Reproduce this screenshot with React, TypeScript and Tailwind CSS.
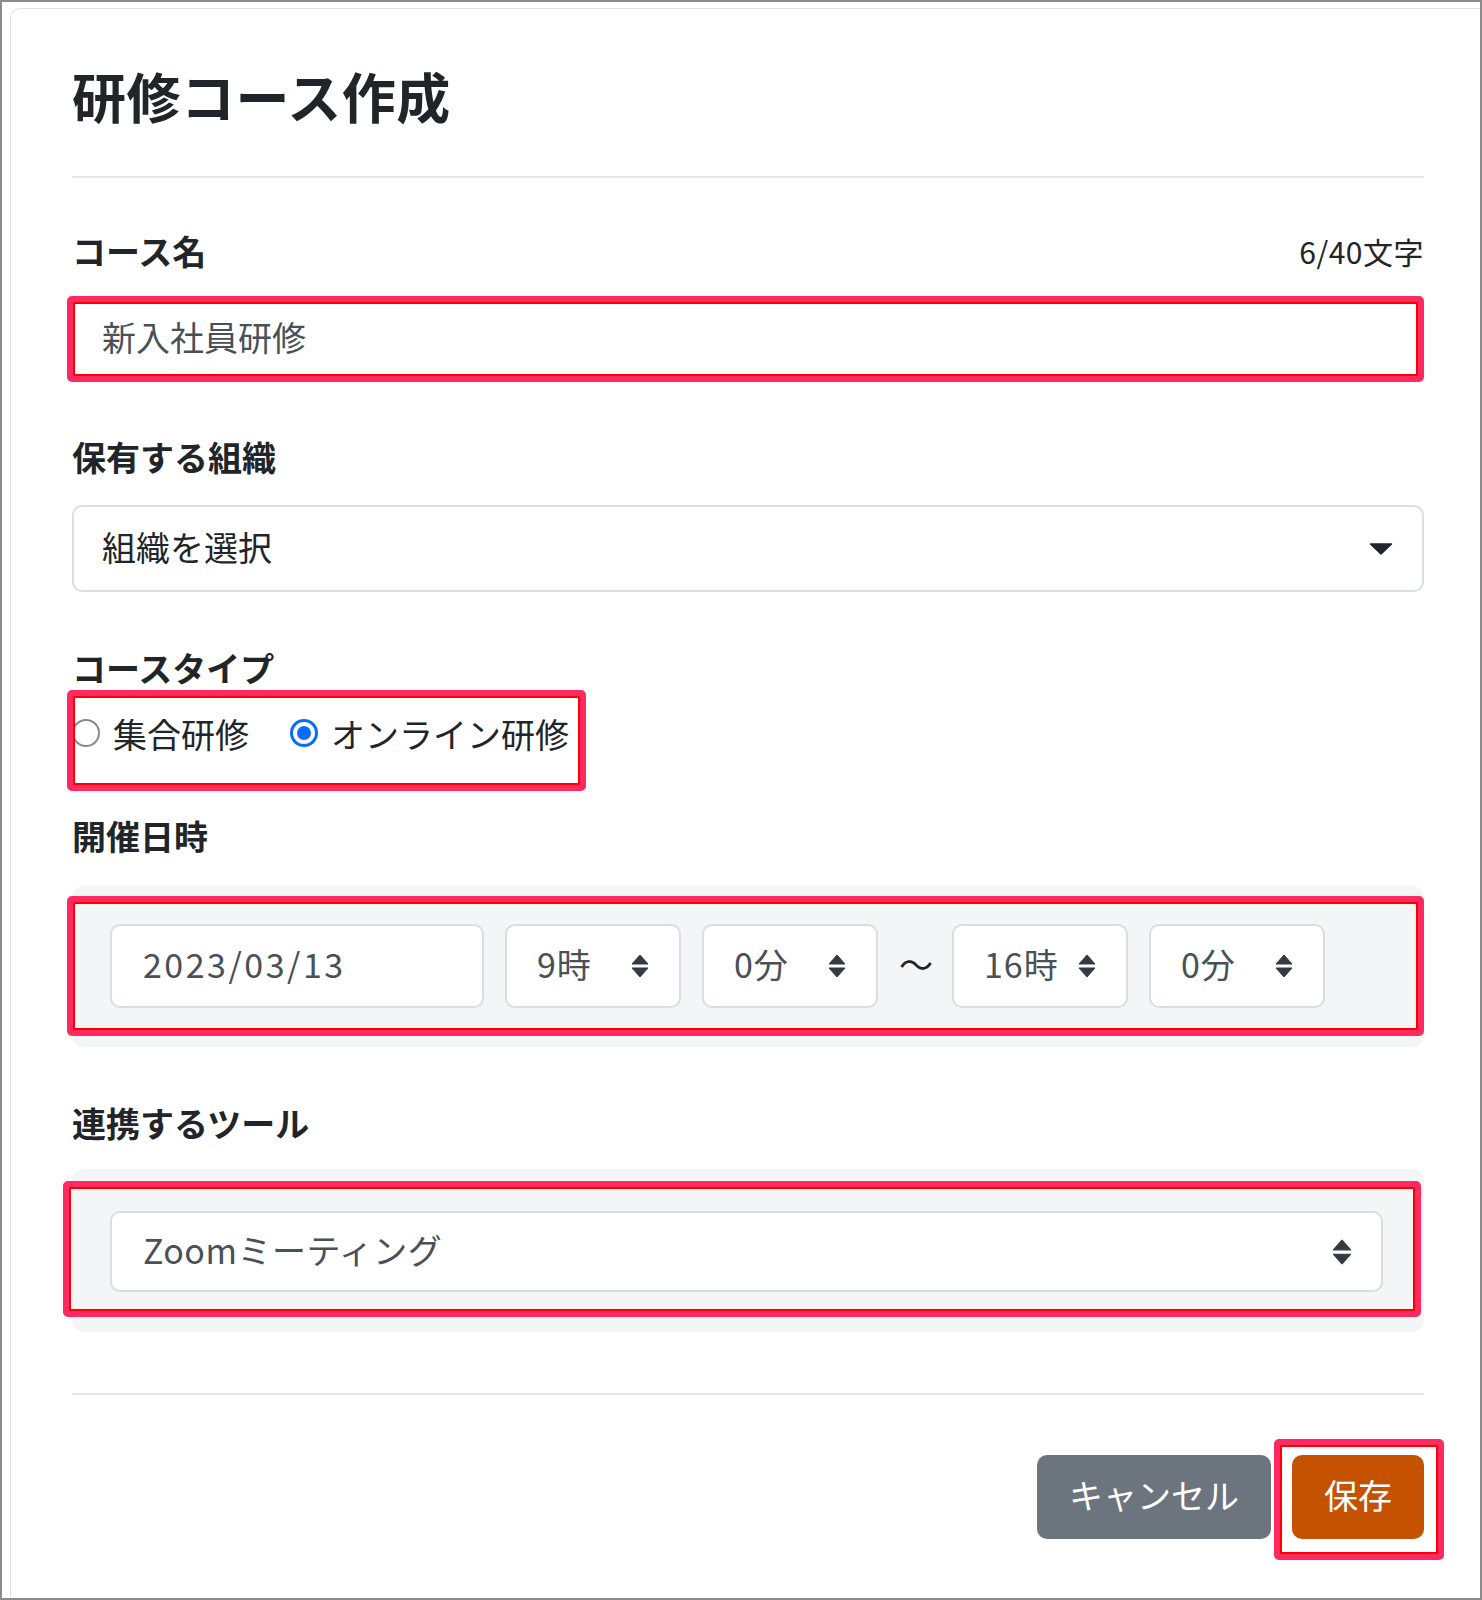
import React from 'react';

// stacked up/down arrows drawn inside the custom selects
const UpDown = ({ w = 18, h = 24 }: { w?: number; h?: number }) => (
  <svg width={w} height={h} viewBox="0 0 18 24" className="mt-[5px] shrink-0">
    <path d="M9 1 L17 10 H1 Z" fill="#343a40" stroke="#343a40" strokeWidth="1" strokeLinejoin="round" />
    <path d="M1 14 H17 L9 23 Z" fill="#343a40" stroke="#343a40" strokeWidth="1" strokeLinejoin="round" />
  </svg>
);

const Caret = () => (
  <svg width="24" height="12" viewBox="0 0 24 12" className="mt-[5px] shrink-0">
    <path d="M1.5 1 H22.5 L12 11 Z" fill="#212529" stroke="#212529" strokeWidth="1.5" strokeLinejoin="round" />
  </svg>
);

// red annotation frame laid over the real control
const Mark = ({ className }: { className: string }) => (
  <div
    className={`pointer-events-none absolute rounded-[5px] border-[6px] border-[#ff2a62] shadow-[inset_0_0_0_2px_#ff0000] ${className}`}
  />
);

const TimeSelect = ({ label }: { label: string }) => (
  <div className="flex h-[84px] w-[176px] items-center justify-between rounded-[10px] border-2 border-[#dadde1] bg-white pb-[5px] pl-[30px] pr-[30px] tracking-[1px] text-[#495057]">
    <span>{label}</span>
    <UpDown />
  </div>
);

const Label = ({ children }: { children: React.ReactNode }) => (
  <div className="text-[34px] font-bold leading-[40px] text-[#212529]">{children}</div>
);

const App = () => {
  return (
    <div className="h-[1600px] w-[1482px] overflow-hidden border-2 border-[#8c8c8c] bg-white font-['Noto_Sans_CJK_JP','Noto_Sans',sans-serif] text-[34px] text-[#212529]">
      <div className="ml-[8px] mt-[6px] h-[1600px] rounded-tl-[10px] border-l border-t border-[#dee2e6] pl-[61px] pr-[56px] pt-[55px]">
        {/* Header */}
        <h1 className="text-[54px] font-bold leading-[64px] tracking-[0.5px] text-[#212529]">研修コース作成</h1>
        <div className="mt-[48px] h-[2px] bg-[#e3e6ea]" />

        {/* コース名 */}
        <div className="mt-[53px] flex items-center justify-between">
          <Label>コース名</Label>
          <span className="text-[30px] leading-[40px] tracking-[0.5px] text-[#212529]">6/40文字</span>
        </div>
        <div className="relative mt-[25px]">
          <div className="flex h-[86px] items-center rounded-[10px] border-2 border-[#dadde1] bg-white pb-[5px] pl-[28px] text-[#495057]">
            新入社員研修
          </div>
          <Mark className="-left-[5px] right-0 top-0 bottom-0" />
        </div>

        {/* 保有する組織 */}
        <div className="mt-[55px]">
          <Label>保有する組織</Label>
        </div>
        <div className="mt-[28px] flex h-[87px] items-center justify-between rounded-[10px] border-2 border-[#dadde1] bg-white pb-[5px] pl-[28px] pr-[29px]">
          <span>組織を選択</span>
          <Caret />
        </div>

        {/* コースタイプ */}
        <div className="mt-[56px]">
          <Label>コースタイプ</Label>
        </div>
        <div className="relative mt-[2px] w-[514px] pb-[38px] pt-[23px]">
          <div className="flex h-[40px] items-center gap-[41px]">
            <label className="flex items-center gap-[13px]">
              <span className="h-[28px] w-[28px] rounded-full border-2 border-[#8a8a8a] bg-white" />
              <span>集合研修</span>
            </label>
            <label className="flex items-center gap-[13px]">
              <span className="flex h-[28px] w-[28px] items-center justify-center rounded-full border-[3px] border-[#0a6cff] bg-white">
                <span className="h-[14px] w-[14px] rounded-full bg-[#0a6cff]" />
              </span>
              <span>オンライン研修</span>
            </label>
          </div>
          <Mark className="-left-[5px] right-0 top-0 bottom-0" />
        </div>

        {/* 開催日時 */}
        <div className="mt-[25px]">
          <Label>開催日時</Label>
        </div>
        <div className="relative mt-[30px] rounded-[12px] bg-[#f4f5f7] pb-[39px] pl-[38px] pr-[40px] pt-[38px]">
          <div className="flex items-center gap-[21px]">
            <div className="flex h-[84px] w-[374px] items-center rounded-[10px] border-2 border-[#dadde1] bg-white pb-[5px] pl-[31px] tracking-[2.5px] text-[#495057]">
              2023/03/13
            </div>
            <TimeSelect label="9時" />
            <TimeSelect label="0分" />
            <span className="w-[32px] pb-[5px] text-center text-[#212529]">～</span>
            <TimeSelect label="16時" />
            <TimeSelect label="0分" />
          </div>
          <Mark className="-left-[5px] right-0 top-[10px] bottom-[11px]" />
        </div>

        {/* 連携するツール */}
        <div className="mt-[56px]">
          <Label>連携するツール</Label>
        </div>
        <div className="relative mt-[26px] rounded-[12px] bg-[#f4f5f7] pb-[40px] pl-[38px] pr-[41px] pt-[42px]">
          <div className="flex h-[81px] items-center justify-between rounded-[10px] border-2 border-[#dadde1] bg-white pb-[5px] pl-[31px] pr-[29px] text-[#495057]">
            <span className="tracking-[0.5px]">Zoomミーティング</span>
            <UpDown w={20} h={26} />
          </div>
          <Mark className="-left-[9px] right-[3px] top-[12px] bottom-[15px]" />
        </div>

        {/* Footer */}
        <div className="mt-[61px] h-[2px] bg-[#e3e6ea]" />
        <div className="mt-[60px] flex justify-end gap-[21px]">
          <button className="h-[84px] rounded-[10px] bg-[#6c757d] px-[32px] pb-[5px] text-[34px] text-white">キャンセル</button>
          <div className="relative">
            <button className="h-[84px] rounded-[10px] bg-[#c55200] px-[32px] pb-[5px] text-[34px] text-white">保存</button>
            <Mark className="-left-[18px] -right-[20px] -top-[16px] -bottom-[21px]" />
          </div>
        </div>
      </div>
    </div>
  );
};

export default App;
